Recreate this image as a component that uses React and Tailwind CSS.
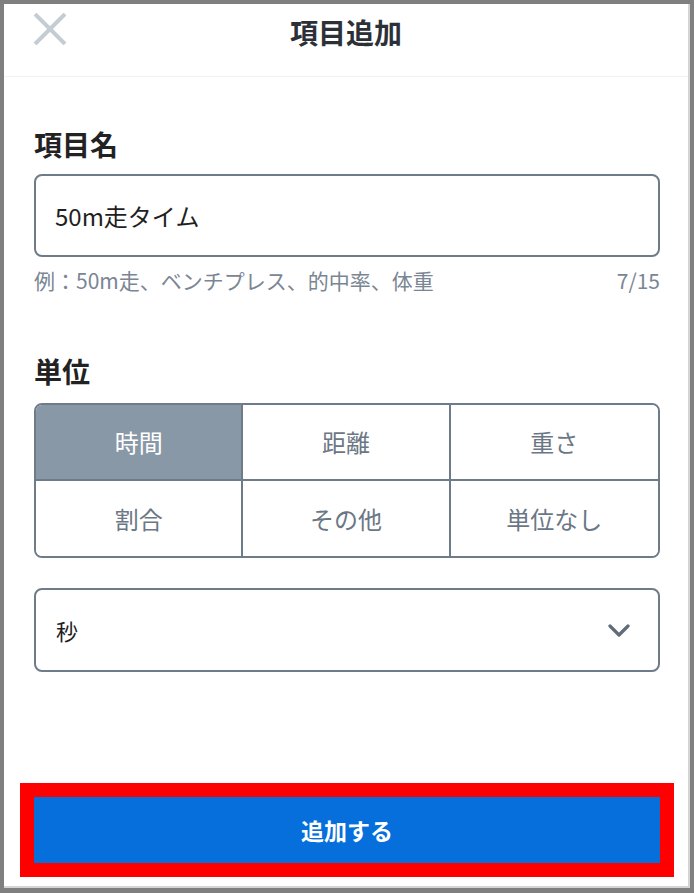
import React from "react";

const FONT = { fontFamily: '"Noto Sans CJK JP", "Noto Sans", sans-serif' };

function Cell({ label, selected, right, bottom }) {
  return (
    <div
      className={
        "flex items-center justify-center text-[24px] " +
        (bottom ? "h-[76px] " : "h-[75px] ") +
        (selected ? "bg-[#8998a7] text-white " : "bg-white text-[#6b7785] ") +
        (right ? "border-r-2 border-[#6e7b88] " : "") +
        (bottom ? "border-b-2 border-[#6e7b88] " : "")
      }
    >
      {label}
    </div>
  );
}

export default function App() {
  return (
    <div className="w-[694px] h-[893px] bg-[#7f7f7f] pl-[4px] pt-[4px] pr-[4px] pb-[5px]" style={FONT}>
      <div className="w-full h-full bg-white border-r-2 border-b-2 border-[#d4d4d4] flex flex-col">
        {/* Header */}
        <div className="relative h-[73px] border-b border-[#f1f1f1] flex justify-center">
          <svg
            className="absolute left-[29px] top-[9px]"
            width="34"
            height="32"
            viewBox="0 0 34 32"
          >
            <path d="M2 1 L32 31 M32 1 L2 31" stroke="#c4ccd4" strokeWidth="4" fill="none" />
          </svg>
          <div className="mt-[10px] text-[28px] leading-[36px] font-bold text-[#2b3137]">項目追加</div>
        </div>

        {/* Body */}
        <div className="ml-[30px] w-[626px] flex flex-col">
          <div className="mt-[49px] text-[28px] leading-[36px] font-bold text-[#222]">項目名</div>
          <div className="mt-[12px] h-[83px] rounded-[8px] border-2 border-[#6e7b88] flex items-center px-[19px] text-[24px] text-[#1f1f1f]">
            50m走タイム
          </div>
          <div className="mt-[8px] flex justify-between text-[21px] leading-[30px] text-[#7a8693]">
            <span>例：50m走、ベンチプレス、的中率、体重</span>
            <span>7/15</span>
          </div>

          <div className="mt-[58px] text-[28px] leading-[36px] font-bold text-[#222]">単位</div>
          <div className="mt-[14px] rounded-[8px] border-2 border-[#6e7b88] overflow-hidden grid grid-cols-3">
            <Cell label="時間" selected right bottom />
            <Cell label="距離" right bottom />
            <Cell label="重さ" bottom />
            <Cell label="割合" right />
            <Cell label="その他" right />
            <Cell label="単位なし" />
          </div>

          <div className="mt-[30px] h-[84px] rounded-[8px] border-2 border-[#6e7b88] flex items-center justify-between pl-[20px] pr-[28px] text-[22px] text-[#1f1f1f]">
            <span>秒</span>
            <svg width="22" height="13" viewBox="0 0 22 13">
              <path d="M2 2 L11 11 L20 2" stroke="#5f6c79" strokeWidth="3.2" fill="none" strokeLinecap="round" strokeLinejoin="round" />
            </svg>
          </div>
        </div>

        <div className="flex-1" />

        {/* Button */}
        <div className="ml-[16px] w-[654px] mb-[9px] border-[14px] border-[#ff0000]">
          <div className="h-[66px] bg-[#066fdc] flex items-center justify-center text-white text-[23px] font-bold">
            追加する
          </div>
        </div>
      </div>
    </div>
  );
}
